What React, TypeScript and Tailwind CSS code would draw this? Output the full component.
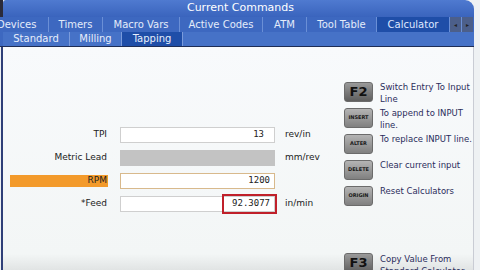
import React from 'react';

const topTabs = [
  { label: 'Devices', w: 49 },
  { label: 'Timers', w: 54 },
  { label: 'Macro Vars', w: 77 },
  { label: 'Active Codes', w: 83 },
  { label: 'ATM', w: 44 },
  { label: 'Tool Table', w: 70 },
  { label: 'Calculator', w: 73, active: true },
];

const subTabs = [
  { label: 'Standard', w: 67 },
  { label: 'Milling', w: 52 },
  { label: 'Tapping', w: 61, active: true },
];

const keys = [
  { key: 'F2', big: true, lines: ['Switch Entry To Input', 'Line'] },
  { key: 'INSERT', lines: ['To append to INPUT', 'line.'] },
  { key: 'ALTER', lines: ['To replace INPUT line.'] },
  { key: 'DELETE', lines: ['Clear current input'] },
  { key: 'ORIGIN', lines: ['Reset Calculators'] },
];

function Key({ label, big }: { label: string; big?: boolean }) {
  return (
    <div
      className={`w-[29px] h-[20px] shrink-0 rounded-[3px] flex items-center justify-center font-bold border border-[#6b6b6b] ${
        big
          ? 'bg-gradient-to-b from-[#9a9a9a] to-[#5e5e5e] text-[13px] text-[#111]'
          : 'bg-gradient-to-b from-[#b4b4b4] to-[#808080] text-[5px] text-[#1a1a1a]'
      }`}
    >
      {label}
    </div>
  );
}

function Row({ label, children, unit, orange }: { label: string; children: React.ReactNode; unit?: string; orange?: boolean }) {
  return (
    <div className="flex items-center h-[16px]">
      <div className="w-[117px] flex items-center pl-[7px]">
        <div
          className={`w-[98px] h-[12px] flex items-center justify-end pr-[1px] text-[9px] text-[#222] ${
            orange ? 'bg-[#f39a2b]' : ''
          }`}
        >
          {label}
        </div>
      </div>
      {children}
      <div className="pl-[10px] text-[9px] text-[#222]">{unit}</div>
    </div>
  );
}

const mono = { fontFamily: '"DejaVu Sans Mono", monospace' };

export default function App() {
  return (
    <div
      className="w-[480px] h-[270px] overflow-hidden flex flex-col bg-[#eef1f3]"
      style={{ fontFamily: '"DejaVu Sans", Verdana, sans-serif' }}
    >
      {/* Title */}
      <div className="flex h-[20px]">
        <div className="w-[3px] bg-[#2b2b3a]" />
        <div className="flex-1 mr-[6px] rounded-tr-[9px] rounded-tl-[3px] bg-gradient-to-b from-[#4f7ad0] to-[#3a64bd] flex items-center justify-center text-white text-[11px] pl-[4px]">
          Current Commands
        </div>
      </div>

      {/* Top tabs */}
      <div className="flex h-[17px] bg-[#3d68c0] mr-[6px] text-[10px] text-[#e4ecfa]">
        {topTabs.map((t) => (
          <div
            key={t.label}
            style={{ width: t.w }}
            className={`flex items-center border-r border-[#6a8fd6] whitespace-nowrap overflow-hidden ${
              t.active ? 'bg-[#1f4ea8] text-[#dfe8ff]' : ''
            } ${t.label === 'Devices' ? 'justify-start' : 'justify-center'}`}
          >
            {t.label === 'Devices' ? <span className="-ml-[3px]">Devices</span> : t.label}
          </div>
        ))}
        <div className="w-[12px] bg-[#4c5f8a] border-r border-[#6a8fd6] flex items-center justify-center text-[6px] text-[#222]">◂</div>
        <div className="w-[11px] bg-[#4c5f8a] flex items-center justify-center text-[6px] text-[#222]">▸</div>
      </div>

      {/* Sub tabs */}
      <div className="flex h-[15px] bg-[#4672c7] mr-[6px] text-[10px] text-[#e8eefb] border-b border-[#1e2d55]">
        <div className="w-[3px] bg-[#3d68c0]" />
        {subTabs.map((t) => (
          <div
            key={t.label}
            style={{ width: t.w }}
            className={`flex items-center justify-center border-r border-[#7a9bdb] ${t.active ? 'bg-[#1f4ea8]' : ''}`}
          >
            {t.label}
          </div>
        ))}
      </div>

      {/* Content */}
      <div className="flex-1 flex">
        <div className="flex-1 flex border-l-2 border-[#2f3f78] ml-[1px] bg-gradient-to-b from-[#f8fafc] via-[#f3f6f6] via-90% to-[#d9dcdc] border-r border-r-[#c9ccd4] mr-[6px]">
          {/* Form */}
          <div className="w-[332px] flex flex-col pt-[80px] gap-[7px]">
            <Row label="TPI" unit="rev/in">
              <div className="w-[155px] h-[16px] bg-white border border-[#cfcfcf] flex items-center justify-end pr-[10px] text-[9px] text-[#222]" style={mono}>
                13
              </div>
            </Row>
            <Row label="Metric Lead" unit="mm/rev">
              <div className="w-[155px] h-[16px] bg-[#c3c3c3]" />
            </Row>
            <Row label="RPM" unit="" orange>
              <div className="w-[155px] h-[16px] bg-white border border-[#d8b98c] flex items-center justify-end pr-[4px] text-[9px] text-[#222]" style={mono}>
                1200
              </div>
            </Row>
            <Row label="*Feed" unit="in/min">
              <div className="w-[155px] h-[16px] bg-white border border-[#cfcfcf] relative flex items-center justify-end pr-[4px] text-[9px] text-[#222]" style={mono}>
                92.3077
                <div className="absolute -top-[3px] -bottom-[3px] left-[101px] -right-[3px] border-2 border-[#c0202a]" />
              </div>
            </Row>
          </div>

          {/* Keys */}
          <div className="flex flex-col pt-[35px] pl-[9px]">
            {keys.map((k) => (
              <div key={k.key} className="flex h-[26px] items-start">
                <Key label={k.key} big={k.big} />
                <div className="pl-[7px] text-[8.5px] leading-[12px] text-[#2b2d5c] -mt-[1px] whitespace-nowrap">
                  {k.lines.map((l) => (
                    <div key={l}>{l}</div>
                  ))}
                </div>
              </div>
            ))}
            <div className="flex items-start mt-[41px]">
              <Key label="F3" big />
              <div className="pl-[7px] text-[8.5px] leading-[12px] text-[#2b2d5c] whitespace-nowrap">
                <div>Copy Value From</div>
                <div>Standard Calculator</div>
              </div>
            </div>
          </div>
        </div>
      </div>
    </div>
  );
}
